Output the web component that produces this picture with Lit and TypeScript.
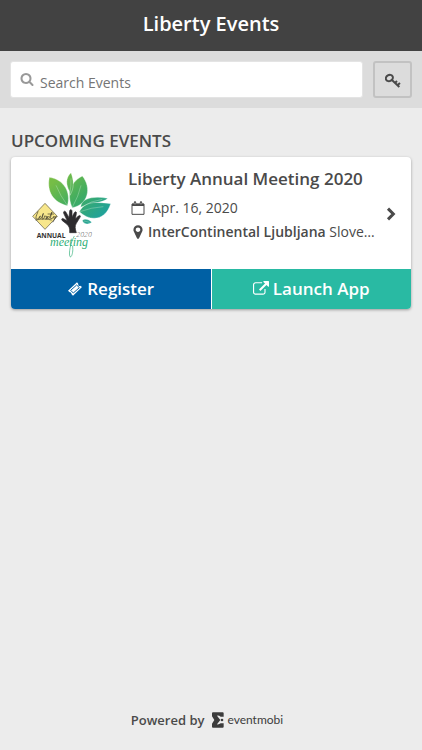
import { LitElement, html, css, svg } from "lit";
import { customElement, state } from "lit/decorators.js";

const searchIcon = html`<svg class="icon search-icon" viewBox="0 0 1792 1792" aria-hidden="true"><path d="M1216 832q0-185-131.5-316.5t-316.5-131.5-316.5 131.5-131.5 316.5 131.5 316.5 316.5 131.5 316.5-131.5 131.5-316.5zm512 832q0 52-38 90t-90 38q-54 0-90-38l-343-342q-179 124-399 124-143 0-273.5-55.5t-225-150-150-225-55.5-273.5 55.5-273.5 150-225 225-150 273.5-55.5 273.5 55.5 225 150 150 225 55.5 273.5q0 220-124 399l343 343q37 37 37 90z"/></svg>`;

const keyIcon = html`<svg class="icon" viewBox="0 0 48 48" aria-hidden="true"><g fill="none" stroke="currentColor" stroke-width="6"><ellipse cx="13" cy="18" rx="11" ry="9" transform="rotate(-30 13 18)"/><path d="M20 23 43 45M30 33l6-6M37 40l8-7"/></g></svg>`;

const calendarIcon = html`<svg class="icon calendar-icon" viewBox="0 0 42 42" aria-hidden="true"><path d="M3 9h36v31H3z" fill="none" stroke="currentColor" stroke-width="3" stroke-linejoin="round"/><path d="M3 8h36v7H3z"/><path d="M12 4v6M30 4v6" stroke="currentColor" stroke-width="7" stroke-linecap="round"/><path d="M12 5v5M30 5v5" stroke="#fff" stroke-width="2"/></svg>`;

const pinIcon = html`<svg class="icon" viewBox="0 0 1792 1792" aria-hidden="true"><path d="M1152 640q0-106-75-181t-181-75-181 75-75 181 75 181 181 75 181-75 75-181zm256 0q0 109-33 179l-364 774q-16 33-47.500 52t-67.500 19-67.500-19-46.500-52l-365-774q-33-70-33-179 0-212 150-362t362-150 362 150 150 362z"/></svg>`;

const ticketIcon = html`<svg class="icon" viewBox="0 0 48 48" aria-hidden="true"><path d="M30 4l4 5a4 4 0 0 0 6 5l5 4L18 44l-5-5a4 4 0 0 0-5-5l-5-5z"/><path d="M29 12l8 8L19 36l-8-8z" fill="none" stroke="var(--register)" stroke-width="3"/></svg>`;

const launchIcon = html`<svg class="icon" viewBox="0 0 1792 1792" aria-hidden="true"><path d="M1408 928v320q0 119-84.500 203.500t-203.500 84.500h-832q-119 0-203.500-84.500t-84.500-203.500v-832q0-119 84.500-203.500t203.500-84.500h704q14 0 23 9t9 23v64q0 14-9 23t-23 9h-704q-66 0-113 47t-47 113v832q0 66 47 113t113 47h832q66 0 113-47t47-113v-320q0-14 9-23t23-9h64q14 0 23 9t9 23zm384-864v512q0 26-19 45t-45 19-45-19l-176-176-652 652q-10 10-23 10t-23-10l-114-114q-10-10-10-23t10-23l652-652-176-176q-19-19-19-45t19-45 45-19h512q26 0 45 19t19 45z"/></svg>`;

const chevronIcon = html`<svg class="chevron" viewBox="0 0 30 42" aria-hidden="true"><path d="M6 5l16 16L6 37" fill="none" stroke="currentColor" stroke-width="9"/></svg>`;

const leaves = [
  "M88 52C82 82 88 124 142 137C154 98 132 58 88 52Z",
  "M187 48C144 70 142 112 157 143C204 134 216 84 187 48Z",
  "M153 38C136 54 138 74 148 93L150 106C163 84 162 62 153 38Z",
  "M182 142C184 112 225 108 263 115C252 128 214 128 182 142Z",
  "M178 155C198 118 240 128 272 131C256 182 212 186 178 155Z",
  "M187 182C195 174 207 179 215 187C204 195 193 193 187 182Z",
];

const eventLogo = html`<svg class="logo" viewBox="0 0 300 300" role="img" aria-label="Liberty annual meeting 2020">
  <defs><linearGradient id="leaf" gradientUnits="userSpaceOnUse" x1="120" y1="50" x2="230" y2="180">
    <stop offset="0" stop-color="#76bd46"/><stop offset=".5" stop-color="#3fac62"/><stop offset="1" stop-color="#20a29a"/>
  </linearGradient></defs>
  ${leaves.map((d) => svg`<path d=${d} fill="url(#leaf)" stroke="#fff" stroke-width="1"/>`)}
  <path d="M108 76Q120 106 142 136M183 76Q176 108 157 142M153 55Q154 78 149 104M184 141Q215 122 247 118M180 155Q214 142 250 140M192 183l17 4" fill="none" stroke="#d9f0dc" stroke-width="1"/>
  <path d="M149 218C150 205 148 200 140 192L127 182C122 177 127 173 132 177L142 183L131 160C129 154 135 151 138 157L147 173L149 153C150 147 156 148 156 154L156 171L163 158C166 153 171 156 169 161L166 177L175 168C180 164 183 168 180 172L169 190C164 198 165 206 169 218Z" fill="#2d2b2e" stroke="#2d2b2e" stroke-width="2"/>
  <path d="M75 130L112 169L75 208L38 169Z" fill="#f7e68b" stroke="#57533c" stroke-width="2" stroke-linejoin="round"/>
  <path d="M54 155C47 170 45 179 52 177C59 175 64 166 60 168C54 174 61 180 66 170L70 160L66 176C71 181 75 169 73 168L80 169L78 178L85 168C80 174 83 181 89 171L96 156L90 177M84 162H101M94 176C99 176 100 171 103 168C97 178 105 176 109 168L99 186M48 180C66 175 83 177 94 180" fill="none" stroke="#39372c" stroke-width="2" stroke-linecap="round" stroke-linejoin="round"/>
  <text class="logo-annual" x="50" y="234">ANNUAL</text>
  <text class="logo-year" x="169" y="232">2020</text>
  <text class="logo-meeting" x="90" y="258">meeting</text>
  <path d="M163 228C152 248 145 280 150 290C156 294 160 272 158 258" fill="none" stroke="#30af78" stroke-width="2"/>
</svg>`;

const brandMark = html`<svg class="brand-mark" viewBox="0 0 36 48" aria-hidden="true"><path d="M3 1h29q3 0 3 3v10h-9q-5-4-11-3l10 13-10 13q6 1 11-3h9v10q0 3-3 3H3q-3 0-3-3v-9l7-11L0 13V4q0-3 3-3z"/><circle cx="30" cy="24" r="4"/></svg>`;

interface EventInfo {
  name: string;
  date: string;
  venue: string;
  place: string;
}

@customElement("app-root")
export class AppRoot extends LitElement {
  @state() private events: EventInfo[] = [
    { name: "Liberty Annual Meeting 2020", date: "Apr. 16, 2020", venue: "InterContinental Ljubljana", place: "Slovenia" },
  ];

  static styles = css`
    :host {
      --ink: #4a4a4a;
      --register: #0060a4;
      --launch: #29baa3;
      display: flex;
      flex-direction: column;
      min-height: 100vh;
      background: #ececec;
      color: var(--ink);
      font-family: "Open Sans", "Noto Sans", sans-serif;
      font-size: 14px;
      line-height: 20px;
    }
    * { box-sizing: border-box; }
    h1, h2, h3, p { margin: 0; font-weight: 600; }
    p { font-weight: 400; }
    .icon { width: 16px; height: 16px; flex: none; fill: currentColor; }
    .calendar-icon { width: 14px; height: 14px; }
    .top { background: #424242; color: #fff; padding: 10px 12px 13px; text-align: center; }
    .top h1 { font-size: 20px; line-height: 28px; }
    .search { display: flex; gap: 10px; padding: 10px; background: #dcdcdc; }
    .field { flex: 1; min-width: 0; display: flex; gap: 6px; height: 37px; padding: 0 9px; background: #fff; border: 1px solid #e4e4e4; border-radius: 3px; }
    .search-icon { width: 14px; height: 14px; margin-top: 10px; color: #999; }
    .field input { flex: 1; min-width: 0; padding: 6px 0 0; border: 0; outline: 0; background: none; color: var(--ink); font: inherit; }
    .field input::placeholder { color: #757575; opacity: 1; }
    .key { display: grid; place-items: center; width: 39px; height: 37px; padding: 0; border: 2px solid #c2c2c2; border-radius: 3px; background: #dcdcdc; color: var(--ink); }
    main { flex: 1; padding: 21px 11px; }
    main h2 { font-size: 17px; line-height: 24px; margin-bottom: 4px; }
    .card { background: #fff; border-radius: 4px; overflow: hidden; box-shadow: 0 1px 3px rgba(0, 0, 0, 0.35); }
    .summary { display: flex; align-items: center; padding: 3px 15px 9px 9px; color: inherit; text-decoration: none; }
    .logo { width: 100px; height: 100px; flex: none; margin-right: 8px; }
    .logo-annual { font: 700 20px "Open Sans", sans-serif; fill: #333; }
    .logo-year { font: italic 300 21px "Open Sans", sans-serif; fill: #444; }
    .logo-meeting { font: italic 36px "Liberation Serif", serif; fill: #30af78; }
    .info { flex: 1; min-width: 0; align-self: flex-start; padding-top: 7px; }
    .info h3 { font-size: 17px; line-height: 24px; margin-bottom: 5px; }
    .line { display: flex; align-items: center; gap: 7px; line-height: 24px; padding-left: 2px; }
    .date { padding-left: 3px; }
    .place { gap: 2px; }
    .place span { overflow: hidden; white-space: nowrap; text-overflow: ellipsis; }
    .place strong { font-weight: 600; }
    .chevron { width: 10px; height: 14px; flex: none; margin: 8px 0 0 6px; }
    .actions { display: grid; grid-template-columns: 1fr 1fr; gap: 1px; }
    .actions a { display: flex; align-items: center; justify-content: center; gap: 4px; height: 40px; color: #fff; font-size: 17px; font-weight: 600; text-decoration: none; }
    .register { background: var(--register); }
    .launch { background: var(--launch); }
    footer { display: flex; justify-content: center; align-items: center; gap: 8px; padding: 0 16px 20px 8px; font-size: 13px; font-weight: 600; }
    .brand { display: flex; align-items: center; gap: 3px; color: #3c3c3c; font: 400 12px/20px Lato, sans-serif; text-decoration: none; }
    .brand-mark { width: 12px; height: 16px; fill: currentColor; }
  `;

  render() {
    return html`
      <header class="top"><h1>Liberty Events</h1></header>
      <form class="search" role="search" @submit=${(e: Event) => e.preventDefault()}>
        <label class="field">${searchIcon}<input type="text" placeholder="Search Events" aria-label="Search Events" /></label>
        <button class="key" type="button" aria-label="Enter event code">${keyIcon}</button>
      </form>
      <main>
        <h2>UPCOMING EVENTS</h2>
        ${this.events.map((ev) => html`
          <article class="card">
            <a class="summary" href="#event">
              ${eventLogo}
              <div class="info">
                <h3>${ev.name}</h3>
                <p class="line date">${calendarIcon}<span>${ev.date}</span></p>
                <p class="line place">${pinIcon}<span><strong>${ev.venue}</strong> ${ev.place}</span></p>
              </div>
              ${chevronIcon}
            </a>
            <div class="actions">
              <a class="register" href="#register">${ticketIcon}<span>Register</span></a>
              <a class="launch" href="#launch">${launchIcon}<span>Launch App</span></a>
            </div>
          </article>`)}
      </main>
      <footer><span>Powered by</span><a class="brand" href="#eventmobi">${brandMark}<span>eventmobi</span></a></footer>
    `;
  }
}
